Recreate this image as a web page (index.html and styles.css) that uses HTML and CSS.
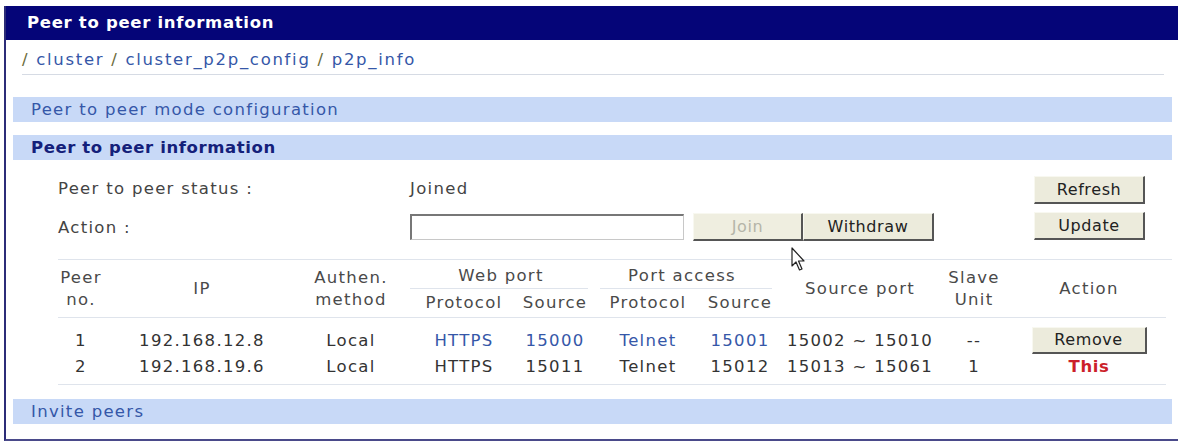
FILE: index.html
```html
<!DOCTYPE html>
<html lang="en">
<head>
    <meta charset="UTF-8">
    <title>Peer to peer information</title>
    <link rel="stylesheet" href="styles.css">
</head>
<body>
    <div class="panel">
        <div class="panel-title">Peer to peer information</div>
        <div class="panel-body">
            <div class="crumbs">
                <span class="sep">/</span> <a href="#">cluster</a>
                <span class="sep">/</span> <a href="#">cluster_p2p_config</a>
                <span class="sep">/</span> <a href="#">p2p_info</a>
            </div>

            <div class="band">Peer to peer mode configuration</div>
            <div class="band band-active">Peer to peer information</div>

            <div class="status-area">
                <div class="status-grid">
                    <div class="label">Peer to peer status :</div>
                    <div class="value">Joined</div>
                    <div class="label">Action :</div>
                    <div class="value action-line">
                        <input type="text" class="peer-input">
                        <button class="btn btn-join" disabled>Join</button>
                        <button class="btn btn-withdraw">Withdraw</button>
                    </div>
                </div>
                <div class="side-buttons">
                    <button class="btn btn-side">Refresh</button>
                    <button class="btn btn-side">Update</button>
                </div>
            </div>

            <table class="peers">
                <colgroup>
                    <col class="c-no">
                    <col class="c-ip">
                    <col class="c-auth">
                    <col class="c-wproto">
                    <col class="c-wsrc">
                    <col class="c-pproto">
                    <col class="c-psrc">
                    <col class="c-sport">
                    <col class="c-slave">
                    <col class="c-action">
                </colgroup>
                <thead>
                    <tr>
                        <th rowspan="2">Peer<br>no.</th>
                        <th rowspan="2">IP</th>
                        <th rowspan="2">Authen.<br>method</th>
                        <th colspan="2" class="group group-web">Web port</th>
                        <th colspan="2" class="group group-port">Port access</th>
                        <th rowspan="2">Source port</th>
                        <th rowspan="2">Slave<br>Unit</th>
                        <th rowspan="2">Action</th>
                    </tr>
                    <tr>
                        <th class="shift">Protocol</th>
                        <th>Source</th>
                        <th>Protocol</th>
                        <th>Source</th>
                    </tr>
                </thead>
                <tbody>
                    <tr class="first">
                        <td>1</td>
                        <td>192.168.12.8</td>
                        <td>Local</td>
                        <td class="shift"><a href="#">HTTPS</a></td>
                        <td><a href="#">15000</a></td>
                        <td><a href="#">Telnet</a></td>
                        <td><a href="#">15001</a></td>
                        <td>15002 ~ 15010</td>
                        <td>--</td>
                        <td><button class="btn btn-remove">Remove</button></td>
                    </tr>
                    <tr class="last">
                        <td>2</td>
                        <td>192.168.19.6</td>
                        <td>Local</td>
                        <td class="shift">HTTPS</td>
                        <td>15011</td>
                        <td>Telnet</td>
                        <td>15012</td>
                        <td>15013 ~ 15061</td>
                        <td>1</td>
                        <td class="this">This</td>
                    </tr>
                </tbody>
            </table>

            <div class="band band-last">Invite peers</div>
        </div>

        <svg class="cursor" width="16" height="26" viewBox="0 0 16 26">
            <path d="M1 1 L1 19 L5 15 L8.5 23 L11 22 L7.5 14 L13 14 Z" fill="#fff" stroke="#222" stroke-width="1.2" stroke-linejoin="round"/>
        </svg>
    </div>
</body>
</html>
```

FILE: styles.css
```css
* {
    margin: 0;
    padding: 0;
    box-sizing: border-box;
}
body {
    font-family: 'DejaVu Sans', Verdana, sans-serif;
    font-size: 16.5px;
    letter-spacing: 1.3px;
    color: #444;
    background: #fff;
}
a {
    color: #3557a8;
    text-decoration: none;
}
.panel {
    position: relative;
    margin: 6px 0 0 4px;
    border-left: 2px solid #2c2c78;
    border-bottom: 2px solid #4a4a8a;
    height: 435px;
}
.panel-title {
    background-color: #050578;
    color: #fff;
    font-weight: bold;
    font-size: 16.5px;
    letter-spacing: 0.7px;
    height: 34px;
    line-height: 34px;
    padding-left: 21px;
}
.panel-body {
    padding: 0 6px 0 7px;
}
.crumbs {
    margin: 0 8px 0 9px;
    padding: 10px 0 4px;
    line-height: 20px;
    border-bottom: 1px solid #d6dbe4;
    letter-spacing: 1.7px;
}
.crumbs .sep {
    color: #6b6b3a;
}
.band {
    background-color: #c8d9f7;
    color: #3557a8;
    height: 25px;
    line-height: 25px;
    padding-left: 18px;
    margin-top: 22px;
}
.band-active {
    margin-top: 13px;
    color: #14207a;
    font-weight: bold;
    letter-spacing: 0.6px;
}
.band-last {
    margin-top: 14px;
}
.status-area {
    display: flex;
    justify-content: space-between;
    padding: 16px 27px 0 0;
    margin-left: 45px;
    height: 100px;
    border-bottom: 1px solid #dfe4ec;
}
.status-grid {
    display: grid;
    grid-template-columns: 352px auto;
    grid-template-rows: 24px 28px;
    row-gap: 13px;
    align-items: center;
}
.action-line {
    display: flex;
    align-items: center;
}
.peer-input {
    width: 274px;
    height: 26px;
    border: 1px solid #c8c8c8;
    border-top: 2px solid #777;
    border-left: 2px solid #777;
    margin-right: 9px;
    font: inherit;
}
.btn {
    font-family: 'DejaVu Sans', Verdana, sans-serif;
    font-size: 16px;
    letter-spacing: 0.6px;
    color: #222;
    background-color: #ecebdc;
    border: 1px solid #f8f8f0;
    border-right: 2px solid #555;
    border-bottom: 2px solid #555;
    height: 28px;
    cursor: pointer;
}
.btn-join {
    width: 110px;
    color: #b5b5a8;
    background-color: #efeee0;
}
.btn-withdraw {
    width: 131px;
}
.side-buttons {
    display: flex;
    flex-direction: column;
    gap: 8px;
}
.btn-side {
    width: 111px;
}
.peers {
    table-layout: fixed;
    border-collapse: collapse;
    width: 1108px;
    margin-left: 45px;
    text-align: center;
}
.c-no { width: 46px; }
.c-ip { width: 196px; }
.c-auth { width: 102px; }
.c-wproto { width: 108px; }
.c-wsrc { width: 90px; }
.c-pproto { width: 96px; }
.c-psrc { width: 88px; }
.c-sport { width: 152px; }
.c-slave { width: 76px; }
.c-action { width: 154px; }
.peers th {
    font-weight: normal;
    line-height: 22px;
    color: #4a4a4a;
    padding: 0;
}
.peers thead tr:first-child th {
    height: 29px;
    padding-top: 2px;
}
.peers thead tr:last-child th {
    height: 28px;
    border-bottom: 1px solid #dfe4ec;
}
.peers thead th[rowspan] {
    border-bottom: 1px solid #dfe4ec;
}
.peers .shift {
    padding-left: 16px;
}
.peers th.group {
    position: relative;
}
.peers th.group-port {
    padding-right: 20px;
}
.peers th.group::after {
    content: "";
    position: absolute;
    left: 8px;
    right: 12px;
    bottom: 0;
    border-bottom: 1px solid #dfe4ec;
}
.peers th.group-port::after {
    left: 0;
}
.peers td {
    height: 26px;
    padding: 0;
    color: #333;
}
.peers tr.first td {
    padding-top: 9px;
    height: 35px;
}
.peers tr.last td {
    height: 31px;
    padding-bottom: 5px;
    border-bottom: 1px solid #dfe4ec;
}
.peers td.shift {
    padding-left: 16px;
}
.btn-remove {
    width: 115px;
    height: 27px;
}
.peers td.this {
    color: #cc1f2a;
    font-weight: bold;
    letter-spacing: 0.6px;
}
.cursor {
    position: absolute;
    left: 785px;
    top: 241px;
}
```
